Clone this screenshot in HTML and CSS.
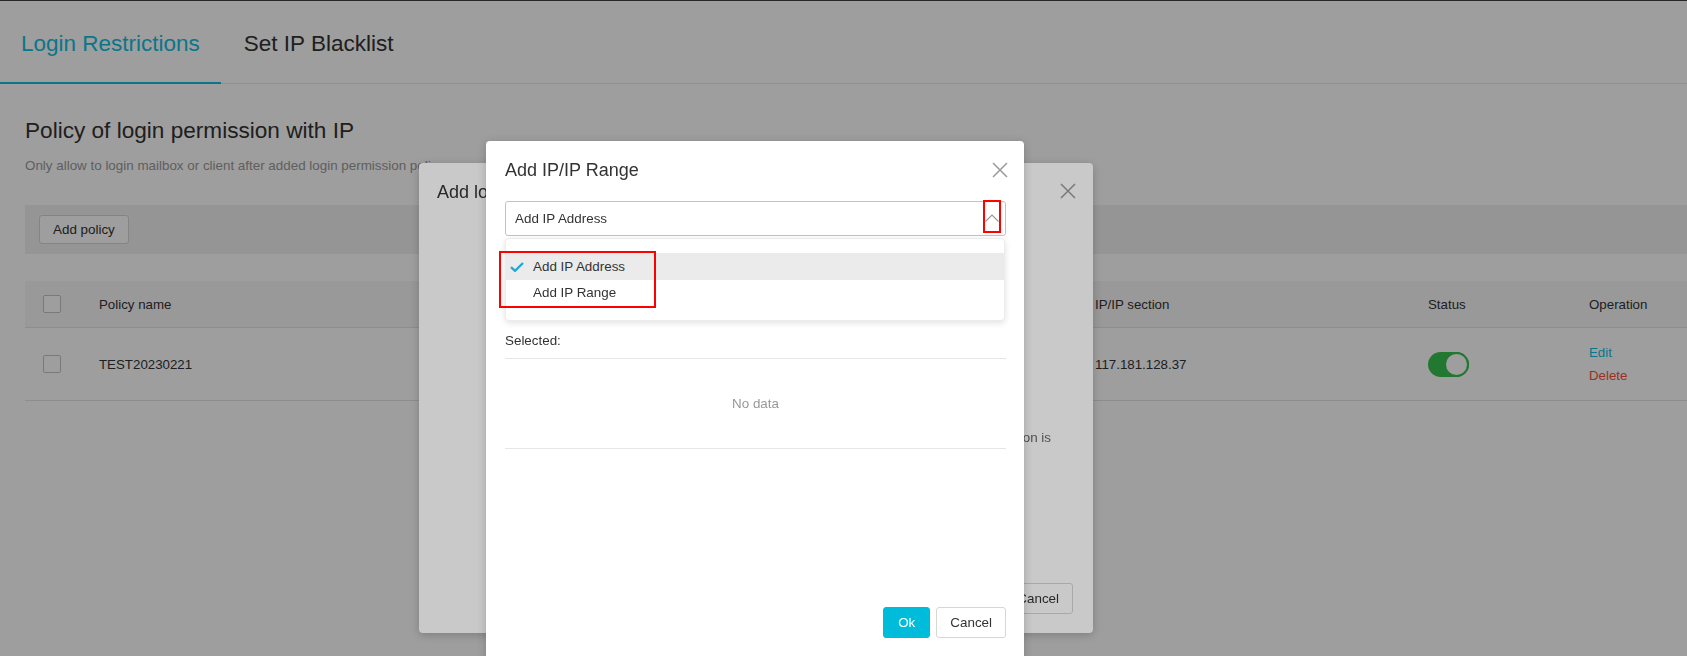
FILE: index.html
```html
<!DOCTYPE html>
<html lang="en">
<head>
  <meta charset="UTF-8" />
  <title>Login Restrictions</title>
  <link rel="stylesheet" href="styles.css">
</head>
<body>
  <div class="pagina">
    <div class="abas">
      <div class="aba ativa">Login Restrictions</div>
      <div class="aba">Set IP Blacklist</div>
    </div>

    <div class="conteudo">
      <h2 class="titulo">Policy of login permission with IP</h2>
      <div class="descricao">Only allow to login mailbox or client after added login permission policy.</div>

      <div class="barra">
        <button class="btn-branco">Add policy</button>
      </div>

      <table class="tabela">
        <thead>
          <tr>
            <th class="col-check"><span class="caixa"></span></th>
            <th class="col-nome">Policy name</th>
            <th class="col-ip">IP/IP section</th>
            <th class="col-status">Status</th>
            <th>Operation</th>
          </tr>
        </thead>
        <tbody>
          <tr>
            <td class="col-check"><span class="caixa"></span></td>
            <td>TEST20230221</td>
            <td>117.181.128.37</td>
            <td><span class="chave"><span class="bola"></span></span></td>
            <td class="ops"><a class="editar">Edit</a><a class="apagar">Delete</a></td>
          </tr>
        </tbody>
      </table>
    </div>
  </div>

  <div class="mascara"></div>

  <div class="janela janela-fundo">
    <div class="janela-topo">Add login permission policy</div>
    <svg class="fechar" width="16" height="16" viewBox="0 0 16 16"><path d="M1 1L15 15M15 1L1 15" stroke="#9a9a9a" stroke-width="1.5" fill="none"/></svg>
    <p class="aviso">After the policy is enabled, only the IPs in the list can log in and the login permission is</p>
    <div class="rodape">
      <button class="btn-ok">Ok</button>
      <button class="btn-branco">Cancel</button>
    </div>
  </div>

  <div class="mascara"></div>

  <div class="janela janela-frente">
    <div class="janela-topo">Add IP/IP Range</div>
    <svg class="fechar" width="16" height="16" viewBox="0 0 16 16"><path d="M1 1L15 15M15 1L1 15" stroke="#9a9a9a" stroke-width="1.5" fill="none"/></svg>

    <div class="seletor">
      <span>Add IP Address</span>
      <span class="seta">
        <svg width="14" height="8" viewBox="0 0 14 8"><polyline points="0.5,7.5 7,1 13.5,7.5" stroke="#9a9a9a" stroke-width="1.2" fill="none"/></svg>
      </span>
      <div class="lista">
        <div class="opcao marcada">
          <svg class="check" width="14" height="10" viewBox="0 0 14 10"><path d="M1 5.2L5 8.8L13 1" stroke="#1ea9da" stroke-width="2.4" fill="none"/></svg>
          Add IP Address
        </div>
        <div class="opcao">Add IP Range</div>
        <div class="destaque"></div>
      </div>
    </div>

    <div class="selecionados">Selected:</div>
    <div class="vazio">No data</div>

    <div class="rodape">
      <button class="btn-ok">Ok</button>
      <button class="btn-branco">Cancel</button>
    </div>
  </div>
</body>
</html>
```

FILE: styles.css
```css
body {
  margin: 0; padding: 0;
  width: 1687px; height: 656px;
  overflow: hidden;
  font-family: 'Liberation Sans', Arial, sans-serif;
  background: #fff;
  color: #333;
}
.pagina { border-top: 1px solid #3c4448; }

/* abas */
.abas {
  display: flex;
  height: 82px;
  border-bottom: 1px solid #e8e8e8;
}
.aba {
  padding: 3px 21px 0 21px;
  font-size: 22.5px;
  line-height: 79px;
  color: #333;
}
.aba.ativa {
  color: #12bfe0;
  border-bottom: 2px solid #12bfe0;
  margin-bottom: -1px;
}
.aba + .aba { padding-left: 23px; }

.conteudo { padding-left: 25px; }
.titulo {
  margin: 34px 0 0;
  font-size: 22.6px;
  font-weight: normal;
  line-height: 26px;
}
.descricao {
  margin-top: 13px;
  font-size: 13.4px;
  line-height: 18px;
  color: #999;
}
.barra {
  margin-top: 30px;
  height: 49px;
  background: #f1f1f1;
  display: flex;
  align-items: center;
  padding-left: 14px;
}
.btn-branco {
  font-family: inherit;
  height: 30px;
  padding: 0 13px;
  font-size: 13.4px;
  color: #333;
  background: #fff;
  border: 1px solid #d6d6d6;
  border-radius: 3px;
}
.barra .btn-branco { height: 29px; }

/* tabela */
.tabela {
  margin-top: 27px;
  width: 1662px;
  border-collapse: collapse;
  font-size: 13.3px;
}
.tabela th {
  height: 46px;
  background: #f7f7f7;
  font-weight: normal;
  text-align: left;
  padding: 0;
  border-bottom: 1px solid #e4e4e4;
}
.tabela td {
  height: 72px;
  padding: 0;
  border-bottom: 1px solid #e4e4e4;
}
.col-check { width: 74px; }
.col-nome { width: 996px; }
.col-ip { width: 333px; }
.col-status { width: 161px; }
.caixa {
  display: block;
  margin-left: 18px;
  width: 16px; height: 16px;
  border: 1px solid #c4c4c4;
  border-radius: 2px;
  background: #fff;
}
.chave {
  display: block;
  width: 41px; height: 25px;
  border-radius: 13px;
  background: #38c351;
  position: relative;
}
.bola {
  position: absolute;
  right: 0; top: 0;
  width: 21px; height: 21px;
  border: 2px solid #38c351;
  border-radius: 50%;
  background: #fff;
}
.ops a { display: block; line-height: 23px; }
.editar { color: #12bfe0; }
.apagar { color: #ff4d2e; }

/* mascaras e janelas */
.mascara {
  position: fixed;
  left: 0; top: 0; right: 0; bottom: 0;
  background: rgba(0,0,0,0.21);
}
.janela {
  position: absolute;
  background: #fff;
  border-radius: 4px;
  box-shadow: 0 2px 10px rgba(0,0,0,0.2);
  box-sizing: border-box;
  display: flex;
  flex-direction: column;
}
.janela-topo {
  padding-top: 17px;
  font-size: 18px;
  line-height: 24px;
  color: #333;
}
.fechar { position: absolute; }

.janela-fundo {
  left: 419px; top: 163px;
  width: 674px; height: 470px;
  padding: 0 20px 19px 18px;
}
.janela-fundo .fechar { right: 17px; top: 20px; }
.aviso {
  margin: 226px 22px 0 0;
  font-size: 13.4px;
  color: #666;
  white-space: nowrap;
  text-align: right;
}
.rodape {
  margin-top: auto;
  display: flex;
  justify-content: flex-end;
  gap: 6px;
}
.btn-ok {
  font-family: inherit;
  height: 31px;
  padding: 0 14px;
  font-size: 13.4px;
  color: #fff;
  background: #00bcdb;
  border: 1px solid #00bcdb;
  border-radius: 3px;
}
.rodape .btn-branco { height: 31px; padding: 0 13px; }

.janela-frente {
  left: 486px; top: 141px;
  width: 538px; height: 520px;
  padding: 0 18px 0 19px;
}
.janela-frente .fechar { right: 16px; top: 21px; }
.janela-frente .janela-topo { padding-bottom: 19px; }
.janela-frente .rodape { margin-top: 158px; }

.seletor {
  position: relative;
  height: 35px;
  border: 1px solid #c2c2c2;
  border-radius: 3px;
  box-sizing: border-box;
  padding-left: 9px;
  display: flex;
  align-items: center;
  font-size: 13.4px;
  color: #333;
}
.seta {
  position: absolute;
  right: 4px; top: -2px;
  width: 18px; height: 33px;
  box-sizing: border-box;
  border: 2px solid #f00;
  display: flex;
  align-items: center;
  justify-content: center;
  padding-top: 3px;
}
.lista {
  position: absolute;
  left: -1px; top: 36px;
  width: 500px;
  box-sizing: border-box;
  padding: 14px 0 14px;
  background: #fff;
  border: 1px solid #ececec;
  border-radius: 4px;
  box-shadow: 0 2px 6px rgba(0,0,0,0.12);
  z-index: 2;
}
.opcao {
  position: relative;
  height: 26px;
  line-height: 26px;
  padding-left: 27px;
}
.opcao.marcada { background: #ebebeb; height: 27px; line-height: 27px; }
.check { position: absolute; left: 4px; top: 9px; }
.destaque {
  position: absolute;
  left: -7px; top: 12px;
  width: 157px; height: 57px;
  box-sizing: border-box;
  border: 2px solid #f00;
}

.selecionados {
  margin-top: 95px;
  font-size: 13.4px;
  line-height: 20px;
  padding-bottom: 7px;
  border-bottom: 1px solid #e6e6e6;
  color: #333;
}
.vazio {
  height: 89px;
  display: flex;
  align-items: center;
  justify-content: center;
  font-size: 13.4px;
  color: #999;
  border-bottom: 1px solid #e6e6e6;
}
```
